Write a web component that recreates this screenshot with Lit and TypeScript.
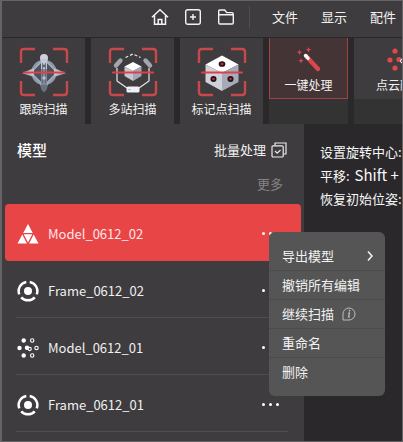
import { LitElement, html, css, svg } from "lit";
import { customElement, property, state } from "lit/decorators.js";
import { classMap } from "lit/directives/class-map.js";

const corners = svg`<path d="M2 16V5q0-3 3-3h11M34 2h11q3 0 3 3v11M48 34v11q0 3-3 3H34M16 48H5q-3 0-3-3V34"
  fill="none" stroke="#c9484b" stroke-width="2.4"/>`;
const beam = svg`<path d="M5 25.5h40" stroke="#dc4048" stroke-width="2.2" stroke-linecap="round"/>`;

const trackIcon = html`<svg width="50" height="50" viewBox="0 0 50 50" aria-hidden="true">
  ${corners}
  <circle cx="25" cy="25.5" r="11.5" fill="#4d515b" stroke="#8d94a4" stroke-width="2.6"/>
  <path d="M25 9l4 7 6 6 9 4-9 3-6 6-4 8-4-8-6-6-9-3 9-4 6-6z" fill="none" stroke="#a4acbc" stroke-width="2"/>
  <circle cx="25" cy="11" r="4" fill="#ccd1dc"/>
  <path d="M22 12h6v10h-6z" fill="#c1c7d4"/>
  <path d="M22 22h6v18l-3 4-3-4z" fill="#808795"/>
  <path d="M6 25l9-3v7zM44 25l-9-3v7z" fill="#c1c7d4"/>
  <path d="M23.500 16v20M26.500 16v20" stroke="#59606e" stroke-width=".8"/>
  <circle cx="25" cy="19" r="1.4" fill="#5d6472"/>
  <circle cx="25" cy="31" r="1.800" fill="#b8bfcc"/>
  <path d="M21 38h8l-1.500 5-2.500 2-2.500-2z" fill="#697080"/>
  ${beam}</svg>`;

const stationIcon = html`<svg width="50" height="50" viewBox="0 0 50 50" aria-hidden="true">
  ${corners}
  <path d="M17.500 10.500l7.500-3.500 7.500 3.500" fill="none" stroke="#e8e8ea" stroke-width="1.2" stroke-dasharray="3 2"/>
  <path d="M9 21v13l10 7M41 21v13l-10 7" fill="none" stroke="#e8e8ea" stroke-width="1.2"/>
  <path d="M8 18.500L12.500 13.500M42 18.500L37.500 13.500" stroke="#a4a5ad" stroke-width="4.400" stroke-linecap="round"/>
  <path d="M25 15l8.500 4.500L25 24l-8.500-4.500z" fill="#fff"/>
  <path d="M16.500 19.500L25 24v10l-8.500-5z" fill="#c5c8d2"/>
  <path d="M33.500 19.500L25 24v10l8.500-5z" fill="#a3a8b6"/>
  <rect x="18.500" y="39.500" width="13" height="6" rx="1.500" fill="#f0f0f8"/>
  <path d="M20.500 42.500h2" stroke="#a4a5ad"/>
  ${beam}</svg>`;

const markerIcon = html`<svg width="50" height="50" viewBox="0 0 50 50" aria-hidden="true">
  ${corners}
  <path d="M25 8.500l16.500 9L25 26 8.500 17.500z" fill="#fff"/>
  <path d="M8.500 17.500L25 26v18L8.500 35z" fill="#ced0da"/>
  <path d="M41.500 17.500L25 26v18l16.500-9z" fill="#a7abb9"/>
  <g fill="#c7232f" stroke="#1d1517" stroke-width="1.700">
    <ellipse cx="25" cy="17" rx="2.500" ry="2"/><circle cx="16.500" cy="32" r="2.200"/><circle cx="33.500" cy="32" r="2.200"/>
  </g>
  ${beam}</svg>`;

const wandIcon = html`<svg width="26" height="26" viewBox="0 0 26 26" aria-hidden="true">
  <path d="M10 9l12 13" stroke="#d9474b" stroke-width="4.400" stroke-linecap="round"/>
  <path d="M9.500 8.500l2.500 2.700" stroke="#fff" stroke-width="3.400" stroke-linecap="round"/>
  <path d="M3.500 2.500l.8 2 2 .8-2 .8-.8 2-.8-2-2-.8 2-.8zM12.500 0l.8 2 2 .8-2 .8-.8 2-.8-2-2-.8 2-.8zM5 11l.8 2 2 .8-2 .8L5 16.600l-.8-2-2-.8 2-.8z" fill="#d9474b"/>
</svg>`;

const cloudIcon = html`<svg width="26" height="26" viewBox="0 0 26 26" aria-hidden="true">
  <g fill="#e0474b"><circle cx="8" cy="4" r="2.600"/><circle cx="3" cy="13" r="2.600"/><circle cx="12" cy="12.500" r="2.600"/><circle cx="8" cy="21" r="2.600"/></g>
  <g fill="none" stroke="#fff"><circle cx="15.500" cy="14" r="2"/><circle cx="18" cy="4" r="2"/><circle cx="18" cy="21" r="2"/></g>
</svg>`;

const meshIcon = html`<svg width="22" height="22" viewBox="0 0 22 22" fill="#fff" aria-hidden="true">
  <path d="M11 1l4.800 9H6.200zM5.300 11.400l4.600 9.100H.5zM16.700 11.400l4.800 9.100h-9.400zM6.700 11.300h8.600L11 19.500z"/></svg>`;

const frameIcon = html`<svg width="22" height="22" viewBox="0 0 22 22" aria-hidden="true">
  <g fill="none" stroke="#fff" stroke-width="2.500">
    <path d="M9.300 1.900A9.300 9.300 0 0 0 2.300 14.400M12.700 1.900A9.300 9.300 0 0 1 19.700 14.400M4.200 17.400A9.300 9.300 0 0 0 17.800 17.400"/>
  </g><circle cx="11" cy="11" r="4" fill="#fff"/></svg>`;

const pointsIcon = html`<svg width="22" height="22" viewBox="0 0 22 22" aria-hidden="true">
  <g fill="#fff"><circle cx="6.700" cy="3.500" r="2.200"/><circle cx="2.500" cy="11" r="2.200"/><circle cx="10" cy="10.700" r="2.200"/><circle cx="6.700" cy="18.500" r="2.200"/></g>
  <g fill="none" stroke="#fff" stroke-width="1.100"><circle cx="15.200" cy="3.500" r="1.700"/><circle cx="12.700" cy="12" r="1.600"/><circle cx="19.500" cy="11" r="1.700"/><circle cx="15.200" cy="18.500" r="1.700"/></g>
</svg>`;

const homeIcon = html`<svg width="18" height="18" viewBox="0 0 18 18" fill="none" stroke="#f4f4f4" stroke-width="1.500" aria-hidden="true">
  <path d="M1 9.300L9 1.700l8 7.600M3.500 7.500v8.800h11V7.500M7.200 16v-4.500h3.600V16"/></svg>`;
const addIcon = html`<svg width="18" height="18" viewBox="0 0 18 18" fill="none" stroke="#f4f4f4" stroke-width="1.400" aria-hidden="true">
  <rect x="1.700" y="1.700" width="14.600" height="14.600" rx="2"/><path d="M9 6v6M6 9h6"/></svg>`;
const folderIcon = html`<svg width="18" height="18" viewBox="0 0 18 18" fill="none" stroke="#f4f4f4" stroke-width="1.400" stroke-linejoin="round" aria-hidden="true">
  <path d="M1.700 6.800V3q0-1 1-1h5l2 2.600h5.300q1.200 0 1.200 1.200v1M1.700 6.800h14.600v8q0 1.200-1.200 1.200H2.900q-1.200 0-1.200-1.200z"/></svg>`;
const batchIcon = html`<svg width="16" height="16" viewBox="0 0 16 16" fill="none" stroke="#ececec" stroke-width="1.200" aria-hidden="true">
  <rect x="1" y="3.800" width="11.200" height="11.200" rx="1"/><path d="M4 3.500V1h11v11h-2.500M4 9l2.200 2.200L9.500 8"/></svg>`;
const infoIcon = html`<svg width="14" height="14" viewBox="0 0 14 14" fill="none" stroke="#bdbdbd" aria-hidden="true">
  <path d="M1 13V7a6 6 0 1 1 6 6z"/><path d="M6 6h1.500L6.500 10H8" stroke-width="1.200"/><circle cx="7.600" cy="3.700" r=".5" fill="#bdbdbd"/></svg>`;
const chevronIcon = html`<svg width="8" height="12" viewBox="0 0 8 12" fill="none" stroke="#f4f4f4" stroke-width="1.500" aria-hidden="true">
  <path d="M2 1.500L6 6l-4 4.500"/></svg>`;

const reset = css`
  * { box-sizing: border-box; }
  button {
    margin: 0; padding: 0; border: 0; background: none; color: inherit;
    font: inherit; cursor: pointer; white-space: nowrap;
  }
  svg { display: block; flex: none; }
  ul { list-style: none; margin: 0; padding: 0; }
`;

@customElement("context-menu")
export class ContextMenu extends LitElement {
  static styles = [reset, css`
    :host { display: block; background: #555; border-radius: 6px; padding: 9px 0 10px; overflow: hidden; width: 116px; }
    li + li button { border-top: 1px solid #4c4b4c; }
    button {
      display: flex; align-items: center; gap: 8px; width: 100%; height: 29px;
      padding: 0 11px 0 13px; font-size: 13px; line-height: 20px; color: #f2f2f2;
    }
    .end { margin-left: auto; }
  `];

  render() {
    return html`<ul role="menu">
      <li><button role="menuitem">导出模型<span class="end">${chevronIcon}</span></button></li>
      <li><button role="menuitem">撤销所有编辑</button></li>
      <li><button role="menuitem">继续扫描 ${infoIcon}</button></li>
      <li><button role="menuitem">重命名</button></li>
      <li><button role="menuitem">删除</button></li>
    </ul>`;
  }
}

interface Item { name: string; icon: unknown; }

@customElement("model-panel")
export class ModelPanel extends LitElement {
  @property({ type: Number }) selected = 0;
  @state() private menuOpen = true;

  private items: Item[] = [
    { name: "Model_0612_02", icon: meshIcon },
    { name: "Frame_0612_02", icon: frameIcon },
    { name: "Model_0612_01", icon: pointsIcon },
    { name: "Frame_0612_01", icon: frameIcon },
  ];

  static styles = [reset, css`
    :host { display: block; background: #3e3c3e; color: #f0f0f0; padding: 0 3px; }
    .head { display: flex; justify-content: space-between; align-items: center; height: 52px; padding: 0 14px 0 12px; }
    h2 { margin: 0; font-size: 15px; line-height: 20px; font-weight: 500; color: #fff; }
    .batch { display: flex; align-items: center; gap: 5px; font-size: 13px; line-height: 20px; }
    .more { display: flex; justify-content: flex-end; align-items: flex-start; height: 28px; padding: 0 18px; font-size: 13px; line-height: 16px; color: #858385; }
    .row { position: relative; display: flex; align-items: center; height: 57px; padding: 2px 22px 0 12px; }
    .row::after {
      content: ""; position: absolute; left: 11px; right: 13px; bottom: 0;
      height: 1px; background: #504e50;
    }
    .row.on { background: #e84547; border-radius: 4px; color: #ffe6e6; }
    .row.on::after { display: none; }
    .name { flex: 1; display: flex; align-items: center; gap: 9px; height: 54px; font-size: 13px; line-height: 20px; text-align: left; }
    .anchor { position: relative; display: flex; }
    .dots { display: flex; gap: 4px; padding: 6px 0; }
    .dots i { width: 3px; height: 3px; border-radius: 50%; background: #fff; }
    context-menu { position: absolute; left: 7px; top: 6px; z-index: 2; }
  `];

  render() {
    return html`
      <div class="head"><h2>模型</h2><button class="batch">批量处理${batchIcon}</button></div>
      <div class="more"><button>更多</button></div>
      <ul>${this.items.map((item, i) => html`
        <li class=${classMap({ row: true, on: i === this.selected })}>
          <button class="name" @click=${() => (this.selected = i)}>${item.icon}<span>${item.name}</span></button>
          <div class="anchor">
            <button class="dots" aria-label="更多" @click=${() => (this.menuOpen = !this.menuOpen)}><i></i><i></i><i></i></button>
            ${i === this.selected && this.menuOpen ? html`<context-menu></context-menu>` : ""}
          </div>
        </li>`)}</ul>`;
  }
}

@customElement("app-root")
export class AppRoot extends LitElement {
  static styles = [reset, css`
    :host {
      display: flex; flex-direction: column; min-height: 100vh; box-sizing: border-box;
      border: 1px solid #656365; border-left-width: 2px; overflow: hidden;
      background: #2a282b; color: #f2f2f2;
      font-family: "Noto Sans CJK SC", sans-serif;
    }
    header { display: flex; align-items: center; height: 36px; padding: 0 0 4px 149px; background: #3e3c3e; overflow: hidden; }
    .tools { display: flex; gap: 15px; padding-right: 14px; border-right: 1px solid #504e50; height: 22px; align-items: center; }
    nav { display: flex; gap: 23px; padding-left: 22px; font-size: 13px; line-height: 20px; }
    .ribbon { display: flex; gap: 6px; height: 87px; padding-top: 1px; overflow: hidden; }
    .tile {
      flex: none; display: flex; flex-direction: column; align-items: center; justify-content: flex-start;
      gap: 2px; width: 83px; padding-top: 9px; background: #3e3c3e; font-size: 12px; line-height: 20px;
    }
    .group { flex: none; width: 79px; background: #343334; }
    .group.wide { width: 92px; }
    .group .tile { width: 100%; height: 61px; }
    .group .tile.active { background: #453435; border: 1px solid #a04346; border-top: 0; }
    main { flex: 1; display: grid; grid-template-columns: minmax(0, 302px) minmax(98px, 1fr); }
    .view { padding: 16px 0 0 16px; overflow: hidden; }
    .view p { margin: 0; font-size: 13px; line-height: 23px; white-space: nowrap; color: #f8f8f8; }
    .keys { font-size: 15px; margin-left: 2px; }
  `];

  render() {
    return html`
      <header>
        <div class="tools">
          <button aria-label="主页">${homeIcon}</button>
          <button aria-label="新建">${addIcon}</button>
          <button aria-label="打开">${folderIcon}</button>
        </div>
        <nav><button>文件</button><button>显示</button><button>配件</button></nav>
      </header>
      <div class="ribbon">
        <button class="tile">${trackIcon}跟踪扫描</button>
        <button class="tile">${stationIcon}多站扫描</button>
        <button class="tile">${markerIcon}标记点扫描</button>
        <div class="group"><button class="tile active">${wandIcon}一键处理</button></div>
        <div class="group wide"><button class="tile">${cloudIcon}点云融合</button></div>
      </div>
      <main>
        <model-panel></model-panel>
        <section class="view">
          <p>设置旋转中心:</p>
          <p>平移: <span class="keys">Shift +</span></p>
          <p>恢复初始位姿:</p>
        </section>
      </main>`;
  }
}
